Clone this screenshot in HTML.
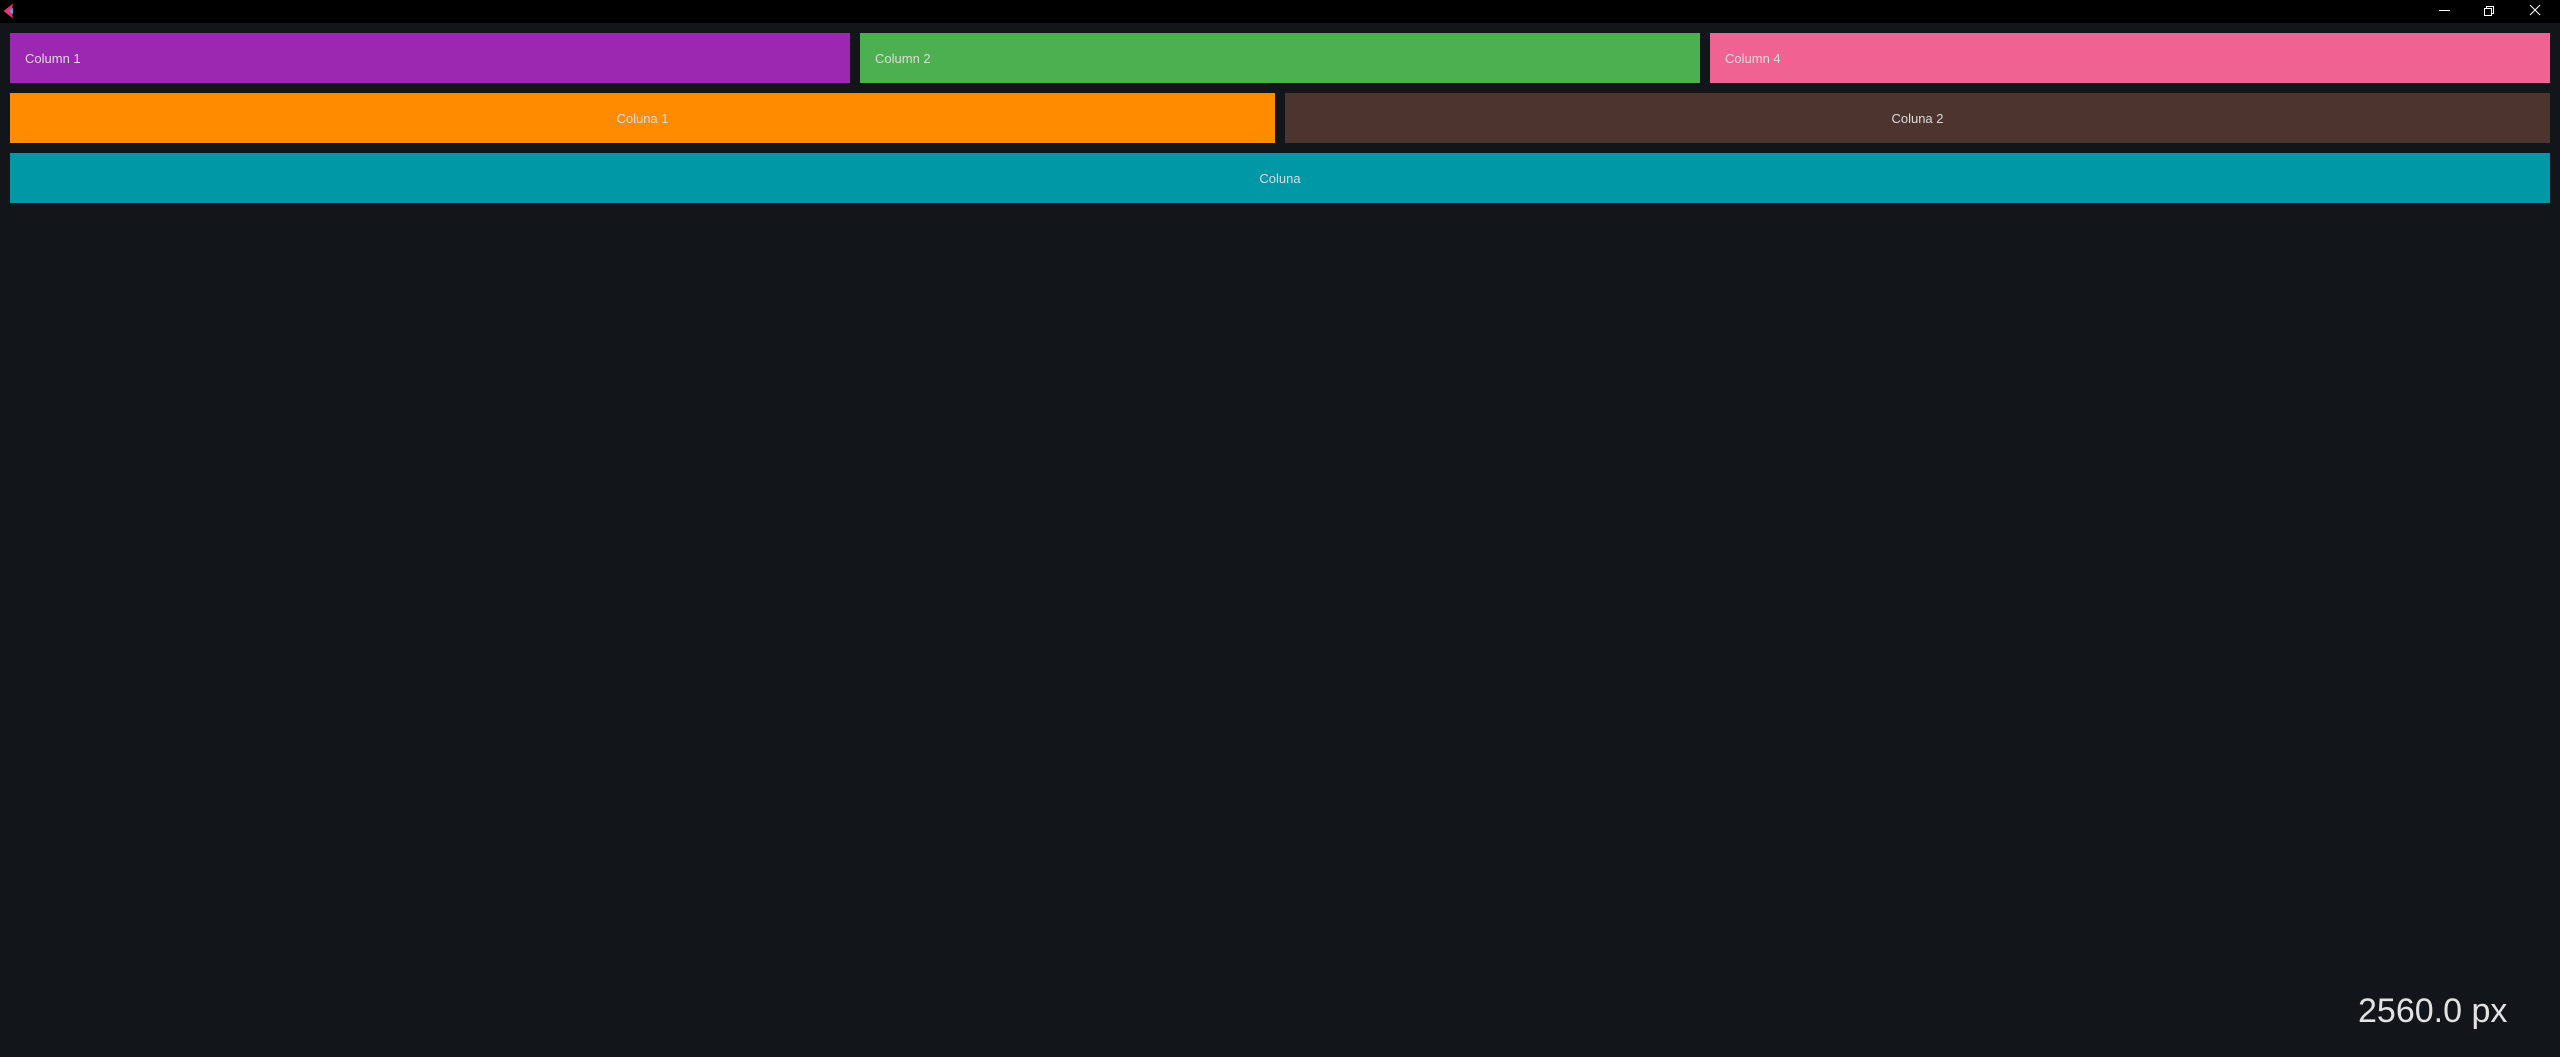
<!DOCTYPE html>
<html><head><style>
html,body{margin:0;padding:0;width:2560px;height:1057px;background:#12151a;overflow:hidden;font-family:"Segoe UI","Liberation Sans","DejaVu Sans",sans-serif;}
.bar{position:absolute;left:0;top:0;width:2560px;height:23px;background:#000;}
.b{position:absolute;height:50px;color:#dcdcdc;font-size:13px;line-height:52px;}
.c{text-align:center;}
</style></head><body>
<div class="bar">
<svg style="position:absolute;left:3px;top:3px" width="14" height="16" viewBox="0 0 14 16"><path d="M10 0.5 L0.5 8 L10 15.5 L8.5 8 Z" fill="#e8336d"/><path d="M10 4.5 L6 8 L10 11.5 Z" fill="#4da3e0"/></svg>
<svg style="position:absolute;left:2436px;top:4px" width="114" height="14" viewBox="0 0 114 14">
<line x1="3" y1="6.5" x2="14" y2="6.5" stroke="#fff" stroke-width="1"/>
<rect x="48.5" y="4.5" width="7" height="7" fill="none" stroke="#fff"/>
<path d="M50.5 4.5 V2.5 H57.5 V9.5 H55.5" fill="none" stroke="#fff"/>
<path d="M94 1 L104 11 M104 1 L94 11" stroke="#fff" stroke-width="1"/>
</svg>
</div>
<div class="b" style="left:10px;top:33px;width:840px;background:#9c27b0;"><span style="padding-left:15px">Column 1</span></div>
<div class="b" style="left:860px;top:33px;width:840px;background:#4caf50;"><span style="padding-left:15px">Column 2</span></div>
<div class="b" style="left:1710px;top:33px;width:840px;background:#f06292;"><span style="padding-left:15px">Column 4</span></div>
<div class="b c" style="left:10px;top:93px;width:1265px;background:#ff8c00;">Coluna 1</div>
<div class="b c" style="left:1285px;top:93px;width:1265px;background:#4e342e;">Coluna 2</div>
<div class="b c" style="left:10px;top:153px;width:2540px;background:#0097a7;">Coluna</div>
<div style="position:absolute;left:2358px;top:987px;font-size:34px;line-height:48px;color:#e2e2e2;">2560.0 px</div>
</body></html>
